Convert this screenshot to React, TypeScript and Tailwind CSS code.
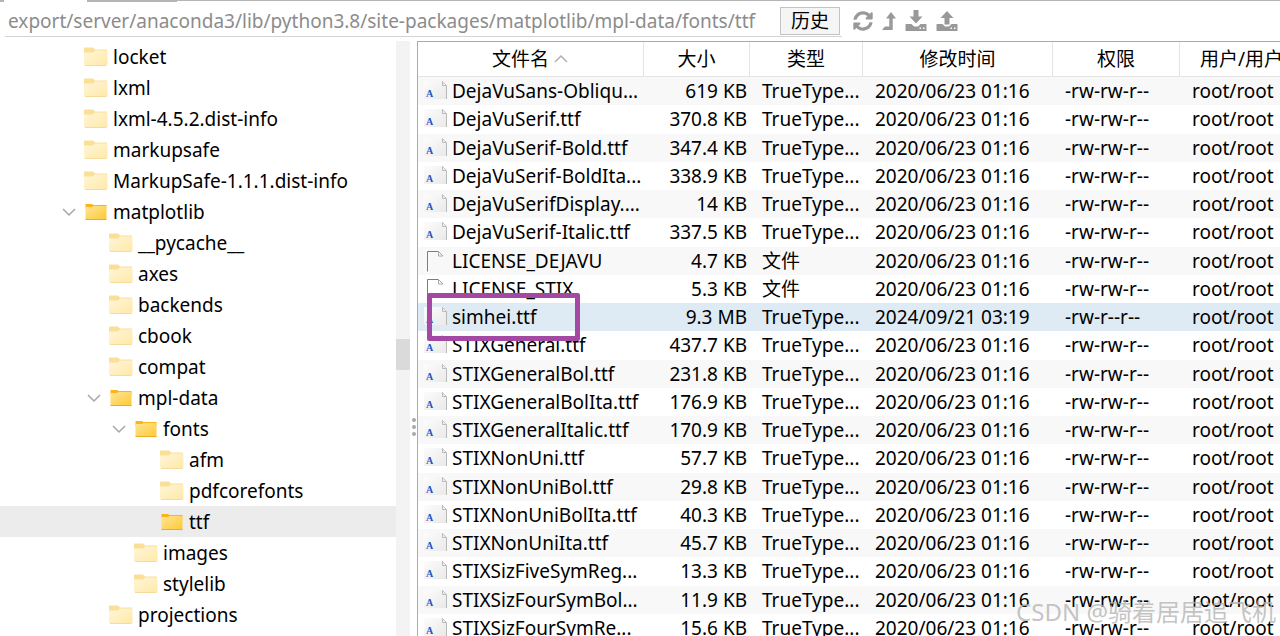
import React, { useState } from 'react';
import { FaSyncAlt } from 'react-icons/fa';

interface TreeNode {
  name: string;
  depth: number;
  open?: boolean;
  filled?: boolean;
}

interface FileRow {
  name: string;
  size: string;
  type?: string;
  date?: string;
  mode?: string;
}

const tree: TreeNode[] = [
  { name: 'locket', depth: 0 },
  { name: 'lxml', depth: 0 },
  { name: 'lxml-4.5.2.dist-info', depth: 0 },
  { name: 'markupsafe', depth: 0 },
  { name: 'MarkupSafe-1.1.1.dist-info', depth: 0 },
  { name: 'matplotlib', depth: 0, open: true, filled: true },
  { name: '__pycache__', depth: 1 },
  { name: 'axes', depth: 1 },
  { name: 'backends', depth: 1 },
  { name: 'cbook', depth: 1 },
  { name: 'compat', depth: 1 },
  { name: 'mpl-data', depth: 1, open: true, filled: true },
  { name: 'fonts', depth: 2, open: true, filled: true },
  { name: 'afm', depth: 3 },
  { name: 'pdfcorefonts', depth: 3 },
  { name: 'ttf', depth: 3, filled: true },
  { name: 'images', depth: 2 },
  { name: 'stylelib', depth: 2 },
  { name: 'projections', depth: 1 },
];

const files: FileRow[] = [
  { name: 'DejaVuSans-Obliqu...', size: '619 KB' },
  { name: 'DejaVuSerif.ttf', size: '370.8 KB' },
  { name: 'DejaVuSerif-Bold.ttf', size: '347.4 KB' },
  { name: 'DejaVuSerif-BoldIta...', size: '338.9 KB' },
  { name: 'DejaVuSerifDisplay....', size: '14 KB' },
  { name: 'DejaVuSerif-Italic.ttf', size: '337.5 KB' },
  { name: 'LICENSE_DEJAVU', size: '4.7 KB', type: '文件' },
  { name: 'LICENSE_STIX', size: '5.3 KB', type: '文件' },
  { name: 'simhei.ttf', size: '9.3 MB', date: '2024/09/21 03:19', mode: '-rw-r--r--' },
  { name: 'STIXGeneral.ttf', size: '437.7 KB' },
  { name: 'STIXGeneralBol.ttf', size: '231.8 KB' },
  { name: 'STIXGeneralBolIta.ttf', size: '176.9 KB' },
  { name: 'STIXGeneralItalic.ttf', size: '170.9 KB' },
  { name: 'STIXNonUni.ttf', size: '57.7 KB' },
  { name: 'STIXNonUniBol.ttf', size: '29.8 KB' },
  { name: 'STIXNonUniBolIta.ttf', size: '40.3 KB' },
  { name: 'STIXNonUniIta.ttf', size: '45.7 KB' },
  { name: 'STIXSizFiveSymReg...', size: '13.3 KB' },
  { name: 'STIXSizFourSymBol...', size: '11.9 KB' },
  { name: 'STIXSizFourSymRe...', size: '15.6 KB' },
];

const indents = ['pl-[60px]', 'pl-[85px]', 'pl-[110px]', 'pl-[136px]'];

const FolderIcon: React.FC<{ filled?: boolean }> = ({ filled }) =>
  filled ? (
    <svg className="w-6 h-5 shrink-0" viewBox="0 0 24 20">
      <defs>
        <linearGradient id="folderOpen" x1="0" y1="0" x2="1" y2="1">
          <stop offset="0" stopColor="#ffe595" />
          <stop offset="1" stopColor="#fdc935" />
        </linearGradient>
      </defs>
      <path d="M1.5 2h6.500l1.500 1h13v4h-21z" fill="#f9b51b" />
      <path d="M1.500 5h6.500l1.500-1h13v13.500h-21z" fill="url(#folderOpen)" />
      <path d="M1.500 17.500h21" stroke="#e9ac25" strokeWidth="1" />
    </svg>
  ) : (
    <svg className="w-6 h-5 shrink-0" viewBox="0 0 24 20">
      <defs>
        <linearGradient id="folderClosed" x1="0" y1="0" x2="1" y2="1">
          <stop offset="0" stopColor="#fff6da" />
          <stop offset="1" stopColor="#ffe9a8" />
        </linearGradient>
      </defs>
      <path d="M0 1.500q0-1 1-1h8l2 2h12v5H0z" fill="#fbdf97" />
      <path d="M0 5.500h9l2-2h11q1.500 0 1.500 1.500v12.500q0 1-1 1h-21q-1.500 0-1.500-1z" fill="url(#folderClosed)" />
      <path d="M1 18.500h21.500" stroke="#f5dc9c" strokeWidth="1" />
    </svg>
  );

const FileIcon: React.FC<{ plain?: boolean }> = ({ plain }) =>
  plain ? (
    <svg className="w-6 h-6 shrink-0" viewBox="0 0 24 24">
      <path d="M3.500 22.500v-20h11" fill="none" stroke="#7d7d7d" strokeWidth="1" />
      <path d="M14.500 2.500v4.500h4.500z" fill="none" stroke="#a8a8a8" strokeWidth="1" />
    </svg>
  ) : (
    <svg className="w-6 h-6 shrink-0" viewBox="0 0 24 24">
      <defs>
        <linearGradient id="fontFile" x1="0" y1="0" x2="1" y2="1">
          <stop offset="0" stopColor="#fcfcfc" />
          <stop offset="1" stopColor="#e9e9e9" />
        </linearGradient>
      </defs>
      <path d="M0 2h18l4.500 4.500V20H0z" fill="url(#fontFile)" />
      <path d="M18.500 2.500v4h4V20" fill="none" stroke="#b9b9b9" strokeWidth="1" />
      <path d="M18 2l4.500 4.500" fill="none" stroke="#c4c4c4" strokeWidth="1" />
      <text x="2" y="18" fontFamily="Liberation Serif, serif" fontWeight="700" fontSize="10" fill="#2453c2">A</text>
    </svg>
  );

const UpIcon = () => (
  <svg className="w-[14px] h-5" viewBox="0 0 14 20" fill="currentColor">
    <path d="M9 1l5 6.500h-3.300V19H0l3-3.500h4.300v-8H4z" />
  </svg>
);

const DriveIcon: React.FC<{ up?: boolean }> = ({ up }) => (
  <svg className="w-[22px] h-[22px]" viewBox="0 0 22 22" fill="currentColor">
    {up ? <path d="M11 1l6.500 7h-4v6.500h-5V8h-4z" /> : <path d="M8.500 0h5v6.500h4L11 13.500 4.500 6.500h4z" />}
    <path
      fillRule="evenodd"
      d="M1 14h5.500l2.500 2.500h4l2.500-2.500H21q.5 0 .5.500v6q0 .5-.5.500H1q-.5 0-.5-.5v-6q0-.5.5-.5zM14.500 17.500v1.500H16v-1.500zM18 17.500v1.500h1.500v-1.500z"
    />
  </svg>
);

const th = 'relative border-r border-b border-[#e4e4e4] font-normal p-0';

export default function App() {
  const [path, setPath] = useState('export/server/anaconda3/lib/python3.8/site-packages/matplotlib/mpl-data/fonts/ttf');
  const [selectedNode, setSelectedNode] = useState('ttf');
  const [selectedFile, setSelectedFile] = useState('simhei.ttf');

  return (
    <div className="relative flex flex-col h-screen overflow-hidden bg-white text-black text-[19px] leading-7 whitespace-nowrap font-['Noto_Sans','Noto_Sans_CJK_SC',sans-serif]">
      <div className="flex h-[2px] shrink-0">
        <div className="w-1 bg-[#b4b4b4]" />
        <div className="w-[83px] bg-white" />
        <div className="w-[90px] bg-[#b4b4b4]" />
        <div className="flex-1 h-px bg-[#b4b4b4]" />
      </div>

      <header className="flex items-start h-[39px] shrink-0 pl-[5px] pt-[3px]">
        <div className="flex items-center h-8 shrink-0 border-b border-[#d4d4d4] pr-[2px]">
          <input
            aria-label="路径"
            value={path}
            onChange={e => setPath(e.target.value)}
            className="w-[775px] px-[3px] text-[#8c8c8c] focus:outline-none"
          />
          <button className="w-[60px] h-7 flex items-center justify-center shrink-0 bg-[#f5f5f5] border border-[#c3c3c3]">历史</button>
        </div>
        <div className="flex items-center gap-[9px] h-8 ml-[11px] text-[#999999] text-[20px]">
          <button aria-label="刷新"><FaSyncAlt /></button>
          <button aria-label="上级目录"><UpIcon /></button>
          <button aria-label="下载"><DriveIcon /></button>
          <button aria-label="上传"><DriveIcon up /></button>
        </div>
      </header>

      <main className="flex flex-1 min-h-0">
        <nav className="flex w-[410px] shrink-0">
          <ul className="flex-1">
            {tree.map(node => (
              <li key={node.name} className={selectedNode === node.name ? 'bg-[#ececec]' : ''}>
                <button
                  onClick={() => setSelectedNode(node.name)}
                  className={`flex items-center w-full h-[31px] ${indents[node.depth]}`}
                >
                  <span className="w-6 shrink-0">
                    {node.open && (
                      <svg className="w-4 h-4" viewBox="0 0 16 16" fill="none" stroke="#a6a6a6" strokeWidth="1.500">
                        <path d="M3 5l6 6 6-6" />
                      </svg>
                    )}
                  </span>
                  <FolderIcon filled={node.filled} />
                  <span className="ml-[5px]">{node.name}</span>
                </button>
              </li>
            ))}
          </ul>
          <div className="w-[14px] bg-[#f3f3f3] pt-[298px]">
            <div className="h-[31px] bg-[#dadada]" />
          </div>
        </nav>
        <div className="flex flex-col w-[7px] shrink-0 pt-[377px] items-center gap-[3px]">
          <i className="size-1 rounded-full bg-[#a8a8a8]" />
          <i className="size-1 rounded-full bg-[#a8a8a8]" />
          <i className="size-1 rounded-full bg-[#a8a8a8]" />
        </div>

        <section className="flex-1 min-w-0 overflow-hidden border-l border-t border-[#8db2d8]">
          <table className="table-fixed border-separate border-spacing-0 w-[1000px] h-[600px]">
            <colgroup>
              <col className="w-[226px]" />
              <col className="w-[106px]" />
              <col className="w-[113px]" />
              <col className="w-[190px]" />
              <col className="w-[127px]" />
              <col />
            </colgroup>
            <thead>
              <tr className="h-[35px]">
                <th className={th}>
                  <span className="flex items-center justify-center gap-1">
                    文件名
                    <svg className="w-4 h-4" viewBox="0 0 16 16" fill="none" stroke="#b0b0b0" strokeWidth="1.500">
                      <path d="M2 11l6-6 6 6" />
                    </svg>
                  </span>
                </th>
                <th className={th}>大小</th>
                <th className={th}>类型</th>
                <th className={th}>修改时间</th>
                <th className={th}>权限</th>
                <th className={`${th} text-left pl-5`}>用户/用户组</th>
              </tr>
            </thead>
            <tbody>
              {files.map((f, i) => (
                <tr
                  key={f.name}
                  onClick={() => setSelectedFile(f.name)}
                  className={selectedFile === f.name ? 'bg-[#dfebf4]' : i % 2 === 0 ? 'bg-[#f8f8f8]' : 'bg-white'}
                >
                  <td className="relative p-0 pl-[6px]">
                    <span className="flex items-center gap-1">
                      <FileIcon plain={!!f.type} />
                      {f.name}
                    </span>
                    {f.name === 'simhei.ttf' && (
                      <span className="absolute z-10 left-[9px] -top-[10px] w-[153px] h-12 border-[5px] border-[#a349a4] rounded-[2px]" />
                    )}
                  </td>
                  <td className="p-0 pr-[3px] text-right">{f.size}</td>
                  <td className="p-0 pl-3">{f.type ?? 'TrueType...'}</td>
                  <td className="p-0 pl-3">{f.date ?? '2020/06/23 01:16'}</td>
                  <td className="p-0 pl-3">{f.mode ?? '-rw-rw-r--'}</td>
                  <td className="p-0 pl-3">root/root</td>
                </tr>
              ))}
            </tbody>
          </table>
        </section>
      </main>

      <p className="absolute z-20 right-1 bottom-2 text-2xl text-[#b5b5b5]/80 pointer-events-none">CSDN @骑着居居追飞机</p>
    </div>
  );
}
